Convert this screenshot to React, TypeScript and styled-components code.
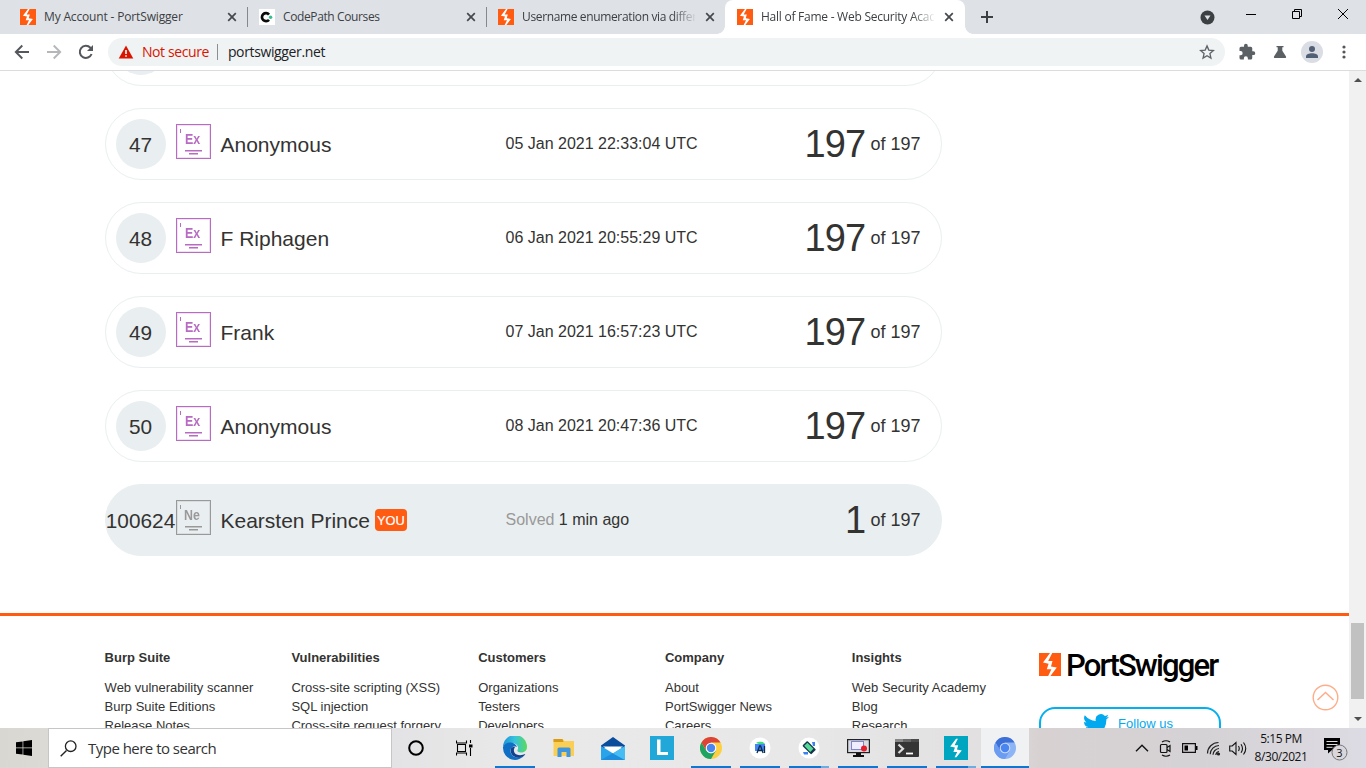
import React from "react";
import styled, { createGlobalStyle, css } from "styled-components";

const Global = createGlobalStyle`
  * { box-sizing: border-box; }
  html, body { margin: 0; padding: 0; overflow: hidden; background: #fff; }
  svg { display: block; flex: none; }
`;

const ui = `"Open Sans", "Noto Sans", sans-serif`;
const orange = "#ff5b11";

const Screen = styled.div`
  width: 1366px;
  height: 768px;
  display: flex;
  flex-direction: column;
  overflow: hidden;
  font-family: "Liberation Sans", Arial, sans-serif;
  color: #333332;
`;

/* ---------- browser tabs ---------- */

const TabStrip = styled.div`
  height: 34px;
  flex: none;
  display: flex;
  align-items: stretch;
  padding-left: 8px;
  background: #dee1e6;
  font-family: ${ui};
`;

const Tab = styled.div<{ $active?: boolean; $divider?: boolean }>`
  position: relative;
  width: 239px;
  display: flex;
  align-items: center;
  padding-left: 12px;
  font-size: 12px;
  color: #3c4043;
  ${(p) =>
    p.$active &&
    css`
      width: 240px;
      background: #fff;
      border-radius: 8px 8px 0 0;
      &::before,
      &::after {
        content: "";
        position: absolute;
        bottom: 0;
        width: 8px;
        height: 8px;
      }
      &::before {
        left: -8px;
        background: radial-gradient(circle at 0 0, transparent 7.5px, #fff 8px);
      }
      &::after {
        right: -8px;
        background: radial-gradient(circle at 100% 0, transparent 7.5px, #fff 8px);
      }
    `}
  ${(p) =>
    p.$divider &&
    css`
      &::after {
        content: "";
        position: absolute;
        right: -1px;
        top: 7px;
        width: 1px;
        height: 20px;
        background: #85888d;
      }
    `}
`;

const TabTitle = styled.span<{ $fade?: boolean; $spacing: number }>`
  width: 173px;
  margin: 0 7px 0 8px;
  white-space: nowrap;
  overflow: hidden;
  line-height: 18px;
  letter-spacing: ${(p) => p.$spacing}px;
  ${(p) => p.$fade && "mask-image: linear-gradient(90deg, #000 150px, transparent 175px);"}
`;

const NewTab = styled.div`
  width: 28px;
  margin-left: 8px;
  display: flex;
  align-items: center;
  justify-content: center;
`;

const WindowControls = styled.div`
  margin-left: auto;
  display: flex;
  align-items: center;
  gap: 36px;
  padding-right: 18px;
  & > svg:first-child { margin-right: -4.5px; }
  & > svg:not(:first-child) { margin-top: -6px; }
`;

const Bolt = ({ size = 16, h = size, bg = orange, inset }: { size?: number; h?: number; bg?: string; inset?: boolean }) => (
  <svg width={size} height={h} viewBox="0 0 22 22" preserveAspectRatio="none">
    <rect width="22" height="22" fill={bg} />
    <path
      transform={inset ? "translate(2.6 2.6) scale(.77)" : undefined}
      d="M11 0h2.200L9.200 7.600h4.300L12 12.800l5.800 1-6.400 8.200H9.200l3.200-6.400H7.800L9.600 10.400 4 9.200Z"
      fill="#fff"
    />
  </svg>
);

const CloseX = () => (
  <svg width="16" height="16" viewBox="0 0 16 16">
    <path d="m4.2 4.2 7.6 7.6m0-7.6-7.6 7.6" stroke="#45494d" strokeWidth="1.7" />
  </svg>
);

const CodePathIcon = () => (
  <svg width="16" height="16" viewBox="0 0 16 16">
    <rect width="16" height="16" fill="#fff" />
    <path d="M10 5.6A4 4 0 1 0 10 10.8" fill="none" stroke="#0b0b0b" strokeWidth="2.7" />
    <circle cx="11.6" cy="8.2" r="1.7" fill="#2ec28e" />
  </svg>
);

/* ---------- address bar ---------- */

const Toolbar = styled.div`
  height: 37px;
  flex: none;
  display: flex;
  align-items: center;
  padding: 0 14px 0 14px;
  border-bottom: 1px solid #dadce0;
  background: #fff;
  font-family: ${ui};
`;

const NavButtons = styled.div`
  width: 94px;
  display: flex;
  gap: 16px;
`;

const Address = styled.div`
  width: 1118px;
  height: 28px;
  border-radius: 14px;
  background: #eff3f4;
  display: flex;
  align-items: center;
  padding: 0 10px;
  font-size: 14px;
  line-height: 20px;
  color: #202124;
`;

const Warning = styled.span`
  margin-left: 8px;
  width: 75px;
  white-space: nowrap;
  letter-spacing: -0.4px;
  color: #d91500;
`;

const Separator = styled.span`
  width: 1px;
  height: 16px;
  background: #8b8f94;
`;

const Host = styled.span`
  margin-left: 10px;
  flex: 1;
  letter-spacing: -0.37px;
`;

const ToolbarActions = styled.div`
  flex: 1;
  display: flex;
  align-items: center;
  padding-left: 13px;
  gap: 16px;
  & > svg:nth-child(2) { margin-left: 1px; }
  & > svg:nth-child(3) { margin-left: -2px; }
  & > svg:nth-child(4) { margin-left: -3px; }
`;

/* ---------- page ---------- */

const Viewport = styled.div`
  height: 657px;
  flex: none;
  display: flex;
  overflow: hidden;
`;

const Page = styled.main`
  position: relative;
  width: 1349px;
  height: 657px;
  overflow: hidden;
  background: #fff;
`;

const Ranking = styled.div`
  display: flex;
  flex-direction: column;
  gap: 22px;
  width: 837px;
  margin: -57px 0 57px 105px;
`;

const Row = styled.div<{ $you?: boolean }>`
  height: 72px;
  display: flex;
  align-items: center;
  border: 1px solid ${(p) => (p.$you ? "#e9eef0" : "#e9efef")};
  border-radius: 36px;
  background: ${(p) => (p.$you ? "#e9eef0" : "#fff")};
  padding-right: 20.5px;
`;

const RankCell = styled.div`
  width: 70px;
  flex: none;
  display: flex;
  justify-content: center;
`;

const Rank = styled.div`
  min-width: 50px;
  height: 50px;
  border-radius: 25px;
  background: #e9eef0;
  display: flex;
  align-items: center;
  justify-content: center;
  font-size: 20.8px;
  padding: 2px 1px 0 0;
`;

const Badge = styled.div<{ $color: string; $plain?: boolean }>`
  width: 35px;
  height: 35px;
  flex: none;
  margin-top: -5px;
  border: 1px solid ${(p) => p.$color};
  box-shadow: inset 0 0 0 1px ${(p) => p.$color}33;
  color: ${(p) => p.$color};
  background: ${(p) => (p.$plain ? "transparent" : "#fff")};
  display: flex;
  flex-direction: column;
  align-items: center;
  padding-top: 5px;
  font-weight: 700;
  font-size: 15.5px;
  line-height: 18px;
  position: relative;
  &::before {
    content: "";
    position: absolute;
    left: 3px;
    top: 4px;
    width: 1px;
    height: 4px;
    background: currentColor;
  }
`;

const BadgeText = styled.span`
  transform: scaleX(0.8);
  margin-left: -3px;
`;

const BadgeLine = styled.i<{ $w: number }>`
  width: ${(p) => p.$w}px;
  height: 1px;
  margin-top: 2px;
  background: currentColor;
  box-shadow: 0 0.5px 0 currentColor;
`;

const Name = styled.div`
  width: 294.5px;
  padding-left: 9.5px;
  padding-top: 2px;
  display: flex;
  align-items: center;
  gap: 5px;
  font-size: 21px;
  white-space: nowrap;
`;

const YouTag = styled.span`
  width: 32px;
  height: 22px;
  margin-top: -2px;
  border-radius: 4px;
  background: ${orange};
  color: #fff;
  font-size: 12.8px;
  -webkit-text-stroke: 0.2px #fff;
  line-height: 23px;
  text-align: center;
`;

const When = styled.div`
  flex: 1;
  font-size: 16px;
  span { color: #999; }
`;

const Score = styled.div`
  display: flex;
  align-items: center;
  gap: 5px;
  line-height: 44px;
  white-space: nowrap;
`;

const Solved = styled.span`
  font-size: 38px;
  letter-spacing: -0.8px;
  margin-bottom: 1px;
`;

const Total = styled.span`
  font-size: 18px;
`;

const Footer = styled.footer`
  border-top: 3px solid ${orange};
  padding: 32px 0 0 104.6px;
  display: flex;
`;

const LinkColumn = styled.div`
  width: 186.8px;
  flex: none;
  font-size: 13px;
  line-height: 19px;
`;

const ColumnTitle = styled.div`
  font-weight: 700;
  margin-bottom: 11px;
`;

const Brand = styled.div`
  padding-top: 5px;
  width: 182px;
`;

const BrandLogo = styled.div`
  height: 34px;
  display: flex;
  gap: 5.5px;
`;

const Wordmark = styled.span`
  font-family: Roboto, sans-serif;
  font-weight: 500;
  font-size: 31px;
  line-height: 25px;
  letter-spacing: -1.85px;
  color: #000;
`;

const Follow = styled.div`
  margin-top: 20px;
  height: 40px;
  border: 2px solid #03b0ef;
  border-radius: 16px;
  color: #03a9ee;
  display: flex;
  align-items: flex-start;
  justify-content: center;
  gap: 9px;
  padding: 5px 3px 0 0;
  font-size: 13px;
  line-height: 20px;
`;

const ToTop = styled.div`
  position: absolute;
  left: 1312px;
  top: 613px;
`;

const Scrollbar = styled.div`
  width: 17px;
  background: #f1f1f1;
  display: flex;
  flex-direction: column;
  align-items: center;
  padding: 7px 0 7px;
`;

const Thumb = styled.div`
  width: 13px;
  height: 76px;
  margin: 541px 0 auto;
  background: #c1c1c1;
`;

/* ---------- taskbar ---------- */

const Taskbar = styled.div`
  height: 40px;
  flex: none;
  display: flex;
  background: linear-gradient(90deg, #d9d7d1 0, #dcdad5 48px, #e3e3e5 392px, #e9e9e9 520px, #e8e8e8 800px, #e2e0e0 980px, #d7d1d2 1040px, #d5d2d5 1200px, #dddbe3 1366px);
  font-family: ${ui};
  color: #111;
`;

const Cell = styled.div`
  width: 48px;
  flex: none;
  display: flex;
  align-items: center;
  justify-content: center;
`;

const Search = styled.div`
  width: 344px;
  flex: none;
  display: flex;
  align-items: center;
  background: #fff;
  border: 1px solid #c6c6c6;
  padding-left: 11px;
  gap: 11px;
  font-size: 15px;
  letter-spacing: -0.52px;
  color: #333;
`;

const Apps = styled.div`
  margin-left: 3px;
  display: flex;
  gap: 1px;
`;

const TaskButton = styled.div<{ $state?: "open" | "multi" | "active" }>`
  position: relative;
  width: 48px;
  display: flex;
  align-items: center;
  justify-content: center;
  background: ${(p) => (p.$state === "active" ? "#f0f1f3" : "transparent")};
  &::after {
    content: "";
    position: absolute;
    bottom: 0;
    height: 2px;
    left: ${(p) => (p.$state === "active" ? 0 : 4)}px;
    right: ${(p) => (p.$state === "active" ? 0 : 4)}px;
    background: ${(p) =>
      !p.$state ? "transparent" : p.$state === "multi" ? "linear-gradient(90deg, #0a78d6 32px, #69aee4 32px)" : "#0a78d6"};
  }
`;

const Tray = styled.div`
  margin-left: auto;
  display: flex;
  align-items: center;
  gap: 8px;
`;

const Clock = styled.div`
  width: 64px;
  margin-left: -6px;
  text-align: center;
  font-size: 12px;
  line-height: 18px;
  letter-spacing: -0.45px;
  white-space: nowrap;
`;

const Notice = styled.div`
  margin: 0 17px 0 2px;
`;

const rows = [
  { rank: "46", name: "Anonymous", when: "05 Jan 2021 20:11:52 UTC" },
  { rank: "47", name: "Anonymous", when: "05 Jan 2021 22:33:04 UTC" },
  { rank: "48", name: "F Riphagen", when: "06 Jan 2021 20:55:29 UTC" },
  { rank: "49", name: "Frank", when: "07 Jan 2021 16:57:23 UTC" },
  { rank: "50", name: "Anonymous", when: "08 Jan 2021 20:47:36 UTC" },
];

const columns = [
  ["Burp Suite", "Web vulnerability scanner", "Burp Suite Editions", "Release Notes"],
  ["Vulnerabilities", "Cross-site scripting (XSS)", "SQL injection", "Cross-site request forgery"],
  ["Customers", "Organizations", "Testers", "Developers"],
  ["Company", "About", "PortSwigger News", "Careers"],
  ["Insights", "Web Security Academy", "Blog", "Research"],
];

const LevelBadge = ({ text, color, plain }: { text: string; color: string; plain?: boolean }) => (
  <Badge $color={color} $plain={plain}>
    <BadgeText>{text}</BadgeText>
    <BadgeLine $w={17} />
    <BadgeLine $w={9} />
  </Badge>
);

const Chrome = ({ blue }: { blue?: boolean }) => {
  const c = blue ? ["#3c6fd8", "#8db4f5", "#6c9cf1"] : ["#db4437", "#fdd043", "#1da462"];
  return (
    <svg width="22" height="22" viewBox="0 0 24 24">
      <circle cx="12" cy="12" r="12" fill={c[1]} />
      <path d="M1.6 6A12 12 0 0 1 22.4 6H12L6.8 15Z" fill={c[0]} />
      <path d="M1.6 6 6.8 15 12 18 17.2 15 12 24A12 12 0 0 1 1.6 6Z" fill={c[2]} />
      <circle cx="12" cy="12" r="5.8" fill={blue ? "#c8dafa" : "#fff"} />
      <circle cx="12" cy="12" r="4.6" fill="#4a86f0" />
    </svg>
  );
};

export default function App() {
  return (
    <Screen>
      <Global />
      <TabStrip>
        <Tab $divider>
          <Bolt />
          <TabTitle $spacing={-0.16}>My Account - PortSwigger</TabTitle>
          <CloseX />
        </Tab>
        <Tab $divider>
          <CodePathIcon />
          <TabTitle $spacing={-0.38}>CodePath Courses</TabTitle>
          <CloseX />
        </Tab>
        <Tab>
          <Bolt />
          <TabTitle $spacing={-0.36} $fade>Username enumeration via different responses</TabTitle>
          <CloseX />
        </Tab>
        <Tab $active>
          <Bolt />
          <TabTitle $spacing={-0.25} $fade>Hall of Fame - Web Security Academy</TabTitle>
          <CloseX />
        </Tab>
        <NewTab>
          <svg width="12" height="12" viewBox="0 0 12 12">
            <path d="M6 0v12M0 6h12" stroke="#3c4043" strokeWidth="2" />
          </svg>
        </NewTab>
        <WindowControls>
          <svg width="15" height="15" viewBox="0 0 15 15">
            <circle cx="7.5" cy="7.5" r="7" fill="#3c4043" />
            <path d="M4.5 5.5h6l-3 4.5Z" fill="#dee1e6" />
          </svg>
          <svg width="10" height="10" viewBox="0 0 10 10">
            <path d="M0 5.5h10" stroke="#000" />
          </svg>
          <svg width="10" height="10" viewBox="0 0 10 10">
            <path d="M.5 2.5h7v7h-7zM2.5 2.5v-2h7v7h-2" fill="none" stroke="#000" />
          </svg>
          <svg width="10" height="10" viewBox="0 0 10 10">
            <path d="m0 0 10 10M10 0 0 10" stroke="#000" />
          </svg>
        </WindowControls>
      </TabStrip>

      <Toolbar>
        <NavButtons>
          <svg width="16" height="16" viewBox="0 0 16 16">
            <path d="M15 8H2M8.3 1.5 1.8 8l6.5 6.5" fill="none" stroke="#54585c" strokeWidth="1.9" />
          </svg>
          <svg width="16" height="16" viewBox="0 0 16 16">
            <path d="M1 8h13M7.7 1.5 14.2 8l-6.5 6.5" fill="none" stroke="#b5b8bb" strokeWidth="1.9" />
          </svg>
          <svg width="16" height="16" viewBox="0 0 16 16">
            <path d="M13.6 10A6.1 6.1 0 1 1 12.4 3.7L14 5.4" fill="none" stroke="#54585c" strokeWidth="2" />
            <path d="M15 1v6H9Z" fill="#54585c" />
          </svg>
        </NavButtons>
        <Address>
          <svg width="16" height="14" viewBox="0 0 16 14">
            <path d="M8 .5 15.3 13.5H.7Z" fill="#d91500" />
            <path d="M8 5v4M8 10.2v1.6" stroke="#fff" strokeWidth="1.6" />
          </svg>
          <Warning>Not secure</Warning>
          <Separator />
          <Host>portswigger.net</Host>
          <svg width="16" height="16" viewBox="0 0 24 24">
            <path d="m12 2.8 2.7 6.4 6.9.6-5.2 4.6 1.5 6.8-5.9-3.6-5.9 3.6 1.5-6.8L2.4 9.8l6.9-.6Z" fill="none" stroke="#5f6368" strokeWidth="2" />
          </svg>
        </Address>
        <ToolbarActions>
          <svg width="18" height="18" viewBox="0 0 24 24">
            <path d="M20.5 11H19V7a2 2 0 0 0-2-2h-4V3.5a2.500 2.500 0 0 0-5 0V5H4a2 2 0 0 0-2 2v3.800h1.500a2.700 2.700 0 0 1 0 5.400H2V20a2 2 0 0 0 2 2h3.800v-1.500a2.700 2.700 0 0 1 5.400 0V22H17a2 2 0 0 0 2-2v-4h1.500a2.500 2.500 0 0 0 0-5Z" fill="#5b6064" />
          </svg>
          <svg width="14" height="14" viewBox="0 0 14 14">
            <path d="M3.500 1h7v1.300H9.300v3.500l3.700 5.700q.6 1.500-.8 1.500H1.800q-1.400 0-.8-1.500l3.700-5.700V2.300H3.500Z" fill="#5b6064" />
          </svg>
          <svg width="22" height="22" viewBox="0 0 22 22">
            <circle cx="11" cy="11" r="11" fill="#dadde3" />
            <circle cx="11" cy="8" r="3" fill="#526075" />
            <path d="M5 17v-1.600C5 13.500 8 12.300 11 12.300s6 1.200 6 3.100V17Z" fill="#526075" />
          </svg>
          <svg width="16" height="16" viewBox="0 0 16 16" fill="#54585c">
            <circle cx="8" cy="3" r="1.600" />
            <circle cx="8" cy="8" r="1.600" />
            <circle cx="8" cy="13" r="1.600" />
          </svg>
        </ToolbarActions>
      </Toolbar>

      <Viewport>
        <Page>
          <Ranking>
            {rows.map((r) => (
              <Row key={r.rank}>
                <RankCell><Rank>{r.rank}</Rank></RankCell>
                <LevelBadge text="Ex" color="#b76cc2" />
                <Name>{r.name}</Name>
                <When>{r.when}</When>
                <Score><Solved>197</Solved><Total>of 197</Total></Score>
              </Row>
            ))}
            <Row $you>
              <RankCell><Rank>100624</Rank></RankCell>
              <LevelBadge text="Ne" color="#999999" plain />
              <Name>Kearsten Prince<YouTag>YOU</YouTag></Name>
              <When><span>Solved</span> 1 min ago</When>
              <Score><Solved>1</Solved><Total>of 197</Total></Score>
            </Row>
          </Ranking>
          <Footer>
            {columns.map(([title, ...links]) => (
              <LinkColumn key={title}>
                <ColumnTitle>{title}</ColumnTitle>
                {links.map((l) => <div key={l}>{l}</div>)}
              </LinkColumn>
            ))}
            <Brand>
              <BrandLogo>
                <Bolt size={22} h={23} />
                <Wordmark>PortSwigger</Wordmark>
              </BrandLogo>
              <Follow>
                <svg width="26" height="22" viewBox="0 0 24 20">
                  <path d="M24 2.400a10 10 0 0 1-2.800.8A5 5 0 0 0 23.300.5a10 10 0 0 1-3.100 1.200A4.900 4.900 0 0 0 11.800 6.200 14 14 0 0 1 1.700 1 4.900 4.900 0 0 0 3.200 7.600a5 5 0 0 1-2.200-.6 4.900 4.900 0 0 0 3.900 4.900 5 5 0 0 1-2.200.1 4.900 4.900 0 0 0 4.600 3.400A10 10 0 0 1 0 17.500 14 14 0 0 0 21.500 5 10 10 0 0 0 24 2.400Z" fill="#03a9ee" />
                </svg>
                Follow us
              </Follow>
            </Brand>
          </Footer>
          <ToTop>
            <svg width="27" height="27" viewBox="0 0 27 27">
              <circle cx="13.500" cy="13.500" r="12.300" fill="#fff" stroke="#ffad88" strokeWidth="1.400" />
              <path d="m5.500 16 8-7.500 8 7.500" fill="none" stroke="#ffad88" strokeWidth="1.500" />
            </svg>
          </ToTop>
        </Page>
        <Scrollbar>
          <svg width="8" height="4" viewBox="0 0 8 4"><path d="m4 0 4 4H0Z" fill="#505050" /></svg>
          <Thumb />
          <svg width="8" height="4" viewBox="0 0 8 4"><path d="m4 4 4-4H0Z" fill="#505050" /></svg>
        </Scrollbar>
      </Viewport>

      <Taskbar>
        <Cell>
          <svg width="16" height="16" viewBox="0 0 16 16">
            <path d="M0 2.300 6.600 1.400v6.200H0ZM7.300 1.300 16 0v7.600H7.300ZM0 8.300h6.600v6.300L0 13.700ZM7.300 8.300H16V16l-8.700-1.300Z" />
          </svg>
        </Cell>
        <Search>
          <svg width="17" height="17" viewBox="0 0 17 17">
            <path d="M6.500 10.500.7 16.300" stroke="#222" strokeWidth="1.400" />
            <circle cx="10.700" cy="6.200" r="5.300" fill="none" stroke="#222" strokeWidth="1.300" />
          </svg>
          Type here to search
        </Search>
        <Cell>
          <svg width="16" height="16" viewBox="0 0 16 16">
            <circle cx="8" cy="8" r="6.800" fill="none" stroke="#000" strokeWidth="2" />
          </svg>
        </Cell>
        <Cell>
          <svg width="17" height="16" viewBox="0 0 17 16">
            <path d="M.5.5V3h10V.5M.5 15.500V13h10v2.500M1.500 4.500h8v7h-8zM14.500 0v3M14.500 8v8" fill="none" stroke="#000" strokeWidth="1.100" />
            <path d="M13 4.500h3.500v3H13z" />
          </svg>
        </Cell>
        <Apps>
          <TaskButton $state="open">
            <svg width="24" height="24" viewBox="0 0 24 24">
              <defs>
                <linearGradient id="edgeTop"><stop offset="0" stopColor="#1e94d8" /><stop offset=".5" stopColor="#37c3dd" /><stop offset="1" stopColor="#5bdb5c" /></linearGradient>
              </defs>
              <path d="M0 11A12 12 0 0 1 24 11c0 4-3 5.500-6 5.500-2.500 0-4-1-3.500-2.500 2-3-1-7-5.500-7C4 7 1 9 0 11Z" fill="url(#edgeTop)" />
              <path d="M0 11c1-3 4.500-5 8-4.500 3 .4 5 2 6 4.500-4-1.500-7 1-6.500 4.500.4 4 5 7 9 5.500 2-.5 4-1.600 5.700-2.800A12 12 0 0 1 0 12Z" fill="#0f6fc5" />
              <path d="M8.500 11.500c-2.500 4 .5 10 6.500 10.200 3 0 6-1.600 7.400-3.600-4 1.700-9.400 1.500-11-1.600-1-2-.5-4 .6-5.300-1.300-.5-2.700-.3-3.500.3Z" fill="#13428e" />
            </svg>
          </TaskButton>
          <TaskButton>
            <svg width="22" height="20" viewBox="0 0 22 20">
              <path d="M.5 1h9l2 2H21v15H.5Z" fill="#fbcf55" />
              <path d="M.5 1h9l1 3H.5z" fill="#d99a14" />
              <path d="M4.500 11a1.500 1.500 0 0 1 1.500-1.500h10a1.500 1.500 0 0 1 1.500 1.500v8h-4v-5h-5v5h-4Z" fill="#3f95de" />
            </svg>
          </TaskButton>
          <TaskButton>
            <svg width="24" height="23" viewBox="0 0 24 23">
              <path d="M0 8.500 12 0l12 8.500V11H0Z" fill="#0a4c9c" />
              <path d="M2 9.500h20L12 16Z" fill="#fff" />
              <path d="M0 9l12 7.500L24 9v14H0Z" fill="#29a3ea" />
              <path d="m0 23 12-7 12 7Z" fill="#1d8ede" />
              <path d="m24 9-12 7.500L24 23Z" fill="#45bdf3" />
            </svg>
          </TaskButton>
          <TaskButton>
            <svg width="24" height="24" viewBox="0 0 24 24">
              <rect width="24" height="24" fill="#22a8d8" />
              <path d="M7 3.500h3.500V16H18v3H7Z" fill="#fff" />
            </svg>
          </TaskButton>
          <TaskButton $state="open"><Chrome /></TaskButton>
          <TaskButton $state="open">
            <svg width="22" height="22" viewBox="0 0 22 22">
              <circle cx="11" cy="11" r="10.500" fill="#fff" />
              <path d="M7 6a5 3 0 0 1 9 1l-3 1Z" fill="#3ddc84" />
              <rect x="6" y="7" width="10" height="7" fill="#4285f4" />
              <path d="m8 16 2.600-7h1l2.500 7M9 13.500h4M15.500 9v7" fill="none" stroke="#0c2c4d" strokeWidth="1.300" />
            </svg>
          </TaskButton>
          <TaskButton $state="multi">
            <svg width="22" height="22" viewBox="0 0 22 22">
              <circle cx="11" cy="11" r="10.500" fill="#fff" />
              <path d="M5 15h5v2.500H6zM14 5h3v4h-2z" fill="#3b82ee" />
              <rect x="7.500" y="4.500" width="7" height="12.500" rx="1" transform="rotate(-45 11 10.500)" fill="#16364d" />
              <rect x="8.800" y="6" width="4.400" height="8.500" transform="rotate(-45 11 10.500)" fill="#55d996" />
            </svg>
          </TaskButton>
          <TaskButton $state="open">
            <svg width="23" height="18" viewBox="0 0 23 18">
              <rect x=".6" y=".6" width="21.800" height="13" fill="#d9dce0" stroke="#222" strokeWidth="1.200" />
              <path d="M9 14h5v2h3v2H6v-2h3z" fill="#111" />
              <rect x="4.500" y="2.500" width="12" height="8" fill="#eef" stroke="#2525b5" strokeDasharray="1 1" />
              <circle cx="17" cy="9.500" r="3" fill="#e5202a" />
            </svg>
          </TaskButton>
          <TaskButton $state="open">
            <svg width="24" height="18" viewBox="0 0 24 18">
              <rect width="24" height="18" rx="1" fill="#343434" />
              <path d="M0 0h8v3H0z" fill="#888" /><path d="M8 0h8v3H8z" fill="#666" /><path d="M16 0h8v3h-8z" fill="#4a4a4a" />
              <path d="m3.500 5.500 4.500 4.300L3.500 14" fill="none" stroke="#ddd" strokeWidth="2.200" />
              <path d="M11 14.500h7" stroke="#fff" strokeWidth="1.800" />
            </svg>
          </TaskButton>
          <TaskButton $state="multi"><Bolt size={24} bg="#00a5bf" inset /></TaskButton>
          <TaskButton $state="active"><Chrome blue /></TaskButton>
        </Apps>
        <Tray>
          <svg width="14" height="8" viewBox="0 0 14 8"><path d="M1 7.200 7 1.200l6 6" fill="none" stroke="#111" strokeWidth="1.400" /></svg>
          <svg width="17" height="17" viewBox="0 0 17 17" fill="none" stroke="#111" strokeWidth="1.200">
            <rect x="3.500" y="4.500" width="6.500" height="8" rx="1" />
            <path d="m10 7.500 3-2v6l-3-2M5 2q4-2.500 8 0M5 15q4 2.500 8 0" />
          </svg>
          <svg width="16" height="10" viewBox="0 0 16 10">
            <path d="M.6.6h12.800v8.800H.6z" fill="none" stroke="#111" strokeWidth="1.200" />
            <path d="M14 3h1.500v4H14zM2.500 2.500H6v5H2.500z" />
          </svg>
          <svg width="15" height="15" viewBox="0 0 15 15" fill="none" stroke="#222" strokeWidth="1.200">
            <path d="M1.500 12.500A11 11 0 0 1 12.500 1.500M4.200 13.300A9 9 0 0 1 13 4.500M7 13.700A6.500 6.500 0 0 1 13 7.500M9.800 14A4 4 0 0 1 13 10.500" />
            <circle cx="12.500" cy="13" r="1" fill="#111" />
          </svg>
          <svg width="18" height="15" viewBox="0 0 18 15" fill="none" stroke="#111" strokeWidth="1.100">
            <path d="M.7 5h2.500L7 1.500v12L3.200 10H.7ZM9.500 5q1.500 2.500 0 5M12 3.300q3 4.200 0 8.400M14.500 1.500q4.500 6 0 12" />
          </svg>
          <Clock>
            <div>5:15 PM</div>
            <div>8/30/2021</div>
          </Clock>
          <Notice>
            <svg width="26" height="28" viewBox="0 0 26 28">
              <path d="M1 4h16v12H9l-4 3.500V16H1Z" fill="#000" />
              <path d="M3.500 7.500h11M3.500 10.500h11M3.500 13.300h6" stroke="#ddd" strokeWidth="1" />
              <circle cx="16.500" cy="18.500" r="7.500" fill="#d9d6dc" stroke="#777" />
              <text x="16.500" y="22.500" fontSize="11" textAnchor="middle" fill="#111">3</text>
            </svg>
          </Notice>
        </Tray>
      </Taskbar>
    </Screen>
  );
}
